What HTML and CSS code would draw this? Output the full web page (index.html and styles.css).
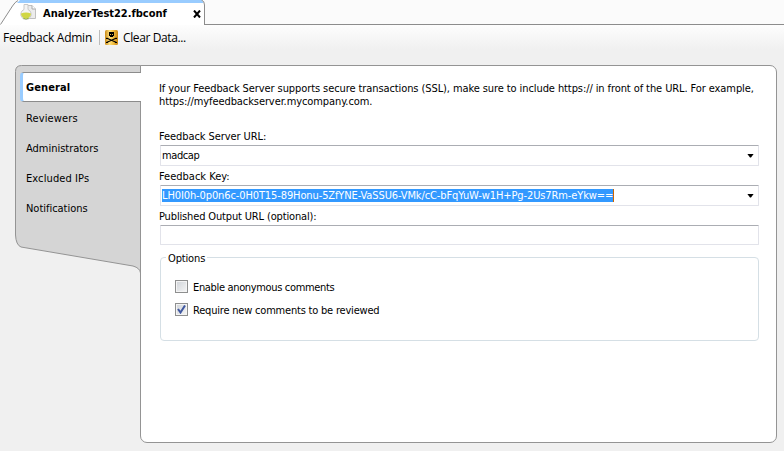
FILE: index.html
```html
<!DOCTYPE html>
<html lang="en">
<head>
<meta charset="utf-8">
<title>AnalyzerTest22.fbconf</title>
<link rel="stylesheet" href="styles.css">
</head>
<body>
<header class="tabs">
  <div class="tab">
    <svg class="tab-shape" width="205" height="25" viewBox="0 0 205 25">
      <path d="M0 25 L1 23 L13 5 Q16 .5 20 .5 H201 Q204.500 .5 204.500 5 V25Z" fill="#fff"/>
      <path d="M17 3 L20 0 H202 L203.500 3Z" fill="#99ccff"/>
      <path d="M.5 24.500 L12.500 6 Q15 2 18 .5 M201.500 0 Q204.500 1 204.500 5 V25" fill="none" stroke="#8c8c8c"/>
    </svg>
    <svg class="file-icon" width="17" height="17" viewBox="0 0 17 17">
      <path d="M6.500 1.500H12L15.500 5V14.500H6.500Z" fill="#ececec" stroke="#c0c0c0"/>
      <path d="M12 1.500V5H15.500" fill="#fff" stroke="#aaa"/>
      <path d="M4 .5H8V5.500A5.200 5.200 0 1 1 4 5.500Z" fill="#f4f4f4" stroke="#c8c8c8"/>
      <path d="M1 9.500Q6 7.500 11 9.500A5 5 0 0 1 1 9.500Z" fill="#d0d645"/>
      <path d="M3 14Q6 16 9 14" fill="none" stroke="#9fb840"/>
    </svg>
    <span class="t title">AnalyzerTest22.fbconf</span>
    <svg class="close" width="8" height="8" viewBox="0 0 8 8"><path d="M1 .5L7 7.500M7 .5L1 7.500" stroke="#000" stroke-width="2"/></svg>
  </div>
  <div class="strip"></div>
</header>
<nav class="toolbar">
  <span class="t tool admin">Feedback Admin</span>
  <i class="sep"></i>
  <svg class="skull" width="13" height="15" viewBox="0 0 13 15">
    <defs><linearGradient id="gold"><stop offset="0" stop-color="#c98a17"/><stop offset=".35" stop-color="#ffe080"/><stop offset=".6" stop-color="#f6c445"/><stop offset="1" stop-color="#c98512"/></linearGradient></defs>
    <rect width="13" height="15" rx="1.500" fill="url(#gold)"/>
    <path d="M4 2H9V6H8V7H5V6H4Z" fill="#000"/>
    <path d="M5 4.500H6M7 4.500H8" stroke="#e8b73d"/>
    <path d="M1.500 8L11.500 12.500M11.500 8L1.500 12.500" stroke="#000" stroke-width="1.200"/>
    <path d="M1 8.500H3M10 8.500H12M1 12.500H3M10 12.500H12" stroke="#000"/>
  </svg>
  <span class="t tool clear">Clear Data...</span>
</nav>
<div class="workspace">
  <aside class="side">
    <svg class="side-shape" width="126" height="210" viewBox="0 0 126 210">
      <path d="M125.500 .5H6.500Q.5 .5 .5 6.500V170Q1 180 6 182L118 201Q125 203 125.500 208Z" fill="#d5d5d5" stroke="#949494"/>
    </svg>
    <a class="item active"><span class="t general">General</span></a>
    <a class="item"><span class="t reviewers">Reviewers</span></a>
    <a class="item"><span class="t administrators">Administrators</span></a>
    <a class="item"><span class="t excluded">Excluded IPs</span></a>
    <a class="item"><span class="t notifications">Notifications</span></a>
  </aside>
  <main class="panel">
    <p class="intro"><span class="t intro1">If your Feedback Server supports secure transactions (SSL), make sure to include https:// in front of the URL. For example,</span><br><span class="t intro2">https://myfeedbackserver.mycompany.com.</span></p>
    <label class="label"><span class="t server">Feedback Server URL:</span></label>
    <div class="field"><span class="t madcap">madcap</span><i class="arrow"></i></div>
    <label class="label"><span class="t fkey">Feedback Key:</span></label>
    <div class="field"><span class="t key">LH0I0h-0p0n6c-0H0T15-89Honu-5ZfYNE-VaSSU6-VMk/cC-bFqYuW-w1H+Pg-2Us7Rm-eYkw==</span><i class="arrow"></i></div>
    <label class="label"><span class="t output">Published Output URL (optional):</span></label>
    <div class="field short"></div>
    <section class="options">
      <h2 class="legend"><span class="t opt">Options</span></h2>
      <div class="check"><i class="box"></i><span class="t enable">Enable anonymous comments</span></div>
      <div class="check"><i class="box"><svg width="9" height="9" viewBox="0 0 9 9"><path d="M1 4L3.500 7.500L8 .5" fill="none" stroke="#4058a0" stroke-width="2"/></svg></i><span class="t require">Require new comments to be reviewed</span></div>
    </section>
  </main>
</div>
</body>
</html>
```
FILE: styles.css
```css
*{box-sizing:border-box}
body{margin:0;width:784px;height:451px;overflow:hidden;background:#f0f0f0;color:#000;font:11px/13px "DejaVu Sans Condensed","DejaVu Sans",sans-serif}
.t{white-space:nowrap}

.tabs{display:flex;height:25px;background:#fbfbfb}
.tab{position:relative;display:flex;align-items:center;width:205px;height:25px;padding-left:20px}
.tab-shape{position:absolute;left:0;top:0}
.file-icon,.title,.close{position:relative}
.title{margin:1px 0 0 6px;font-weight:700;letter-spacing:-.02px}
.close{margin:3px 4px 0 auto}
.strip{flex:1;border-bottom:1px solid #8c8c8c}

.toolbar{display:flex;align-items:center;height:25px;padding-left:3px;background:linear-gradient(#fdfdfd,#f0f0f0)}
.tool{font:12px/15px "Open Sans",sans-serif}
.admin{letter-spacing:-.26px}
.clear{margin-left:5px;letter-spacing:-.38px}
.sep{width:1px;height:15px;background:#bbb;margin:0 5px 0 7px}

.workspace{display:flex;padding:15px 7px 0 15px}
.side{position:relative;width:125px;padding-top:7px}
.side-shape{position:absolute;left:0;top:0;z-index:1;overflow:visible}
.item{position:relative;z-index:2;display:flex;align-items:center;height:30px;padding:2px 0 0 11px}
.active{margin:0 -1px 0 5px;padding:1px 0 0 3px;border:1px solid #8c8c8c;border-left:3px solid #99ccff;border-right:0;border-radius:4px 0 0 4px;background:#fff;font-weight:700}
.general{letter-spacing:.12px}
.reviewers{letter-spacing:.12px}
.administrators{letter-spacing:-.02px}
.excluded{letter-spacing:.1px}
.notifications{letter-spacing:-.03px}

.panel{width:637px;height:378px;border:1px solid #949494;border-radius:0 7px 7px 7px;background:#fff;padding:16px 17px 0 18px}
.intro{margin:0 0 18px}
.intro1{letter-spacing:-.09px}
.intro2{letter-spacing:-.09px}
.label{display:block;height:19px;padding-top:4px}
.server{letter-spacing:-.08px}
.output{letter-spacing:-.15px}
.field{display:flex;align-items:center;justify-content:space-between;height:21px;margin-left:1px;padding:0 4px 0 1px;border:1px solid #e2e3ea;border-top-color:#abadb3;border-radius:1px}
.short{height:20px}
.madcap{letter-spacing:-.4px}
.key{letter-spacing:-.11px;height:13px;background:#39f;color:#fff;border-right:1px solid #c60}
.arrow{width:7px;height:4px;background:#000;clip-path:polygon(0 0,100% 0,57% 100%,43% 100%)}

.options{height:84px;margin:12px 0 0 1px;padding:0 0 0 14px;border:1px solid #d5dfe5;border-radius:4px}
.legend{width:max-content;height:13px;margin:-6px 0 15px -9px;padding:0 2px;background:#fff;font-size:11px;font-weight:400}
.opt{letter-spacing:-.15px}
.check{display:flex;align-items:center;gap:5px;height:13px;margin-bottom:10px}
.check .t{padding-top:1px}
.box{display:flex;align-items:center;justify-content:center;width:13px;height:13px;border:1px solid #8e8f8f;background:linear-gradient(135deg,#cfd3d8,#f6f6f6);box-shadow:inset 0 0 0 1px #f4f4f4}
.enable{letter-spacing:-.34px}
.require{letter-spacing:-.2px}
```
